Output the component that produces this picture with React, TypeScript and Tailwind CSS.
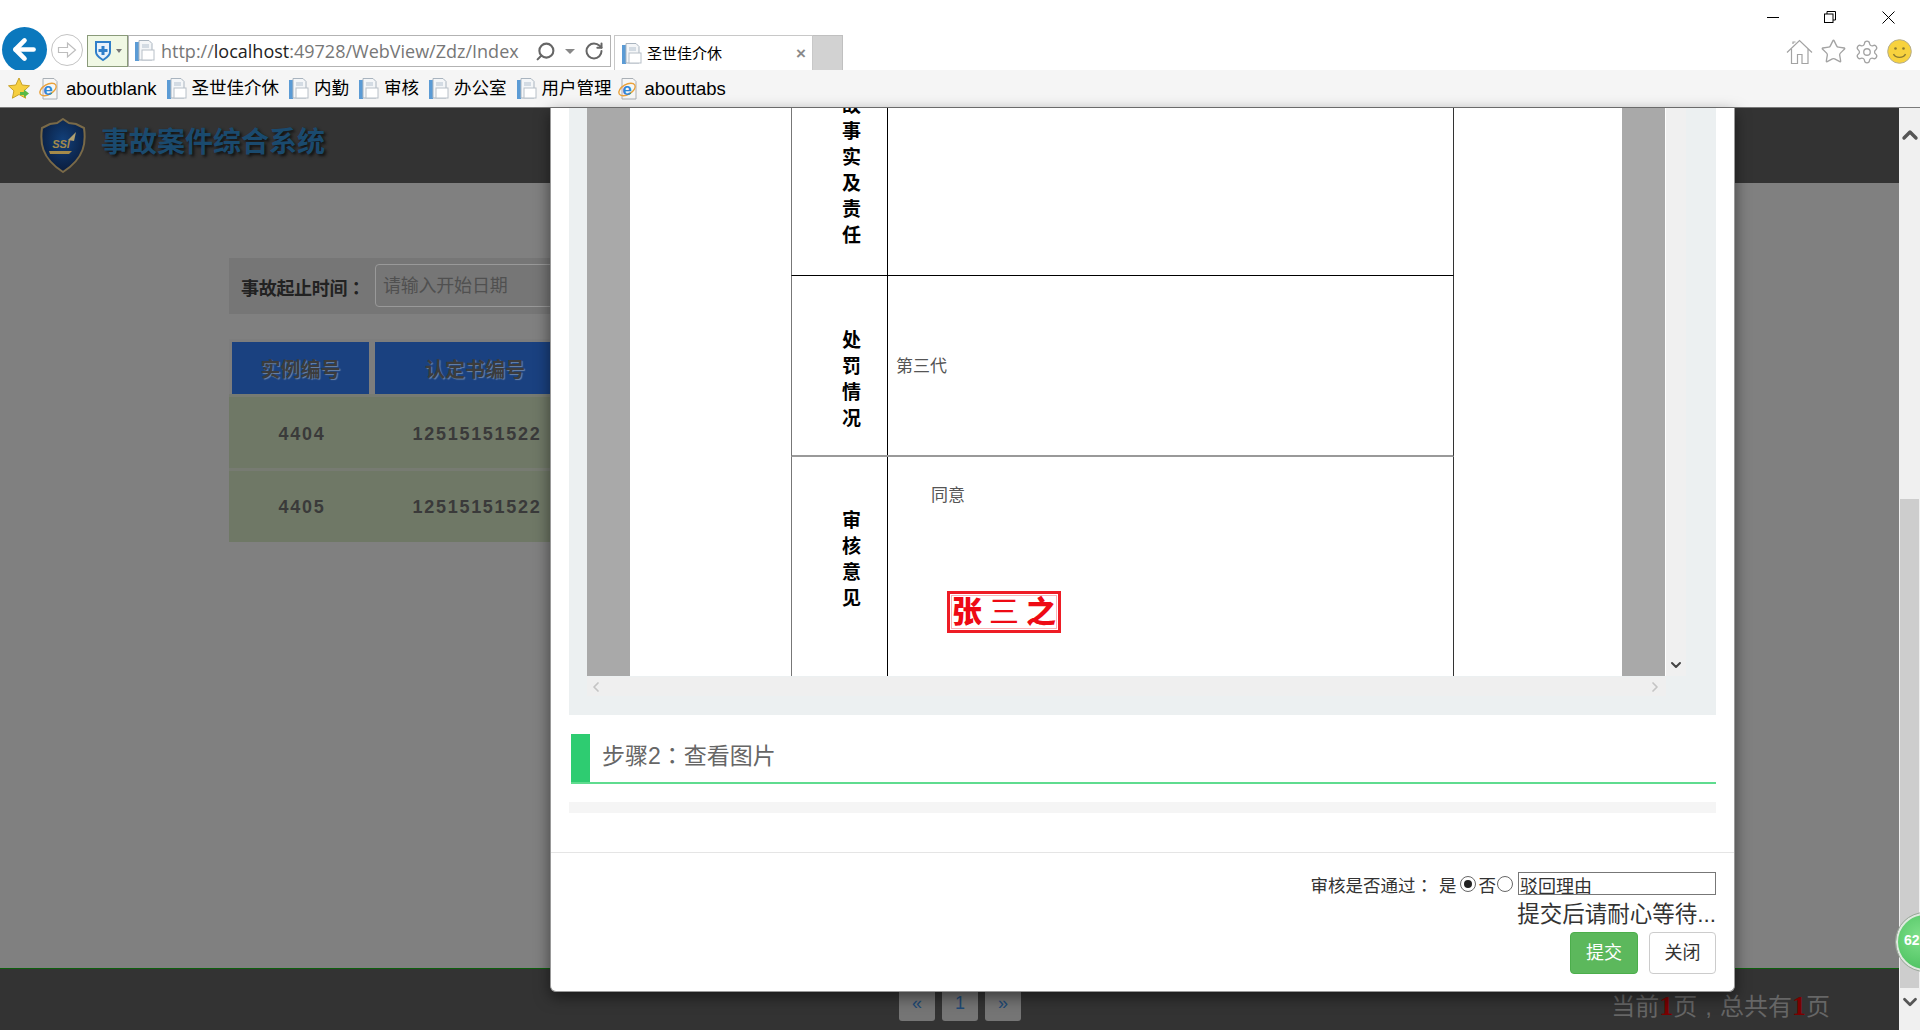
import React from "react";
import { ArrowLeft, ChevronDown, ChevronLeft, ChevronRight, ChevronUp, RotateCw, Search, Settings, Star } from "lucide-react";

function PageIcon({ className = "" }: { className?: string }) {
  return (
    <svg width="24" height="24" viewBox="0 0 24 24" className={className}>
      <rect x="2" y="3" width="4" height="19" fill="#5b9bd5" />
      <path d="M6 1.500h10l3 3V21H6z" fill="#f4f6f8" stroke="#a9b4bf" />
      <rect x="9" y="11" width="12" height="10" fill="#fff" stroke="#b8c0c8" />
      <rect x="9" y="5" width="7" height="4" fill="#d3dbe3" />
    </svg>
  );
}

function IeIcon() {
  return (
    <svg width="24" height="24" viewBox="0 0 24 24" className="shrink-0">
      <path d="M6 1.500h11l3 3V22H6z" fill="#f6f6f6" stroke="#aab0b6" />
      <ellipse cx="11" cy="12.500" rx="9" ry="5" fill="none" stroke="#e9a23b" strokeWidth="1.400" transform="rotate(-30 11 12.500)" />
      <text x="11" y="18" textAnchor="middle" fontSize="17" fontWeight="700" fill="#2f86d6" fontFamily="Liberation Sans">e</text>
    </svg>
  );
}

function Bookmark({ label, ie, className = "" }: { label: string; ie?: boolean; className?: string }) {
  return (
    <div className={`flex items-center ${ie ? "gap-[5px]" : "gap-[3px]"} ${className}`}>
      {ie ? <IeIcon /> : <PageIcon className="shrink-0" />}
      <span className={`${ie ? "text-[18.5px]" : "text-[17.5px]"} leading-none text-black whitespace-nowrap`}>{label}</span>
    </div>
  );
}

function BrowserChrome() {
  return (
    <div className="h-[108px] shrink-0 flex flex-col border-b border-[#7a7a7a]">
      <div className="h-[70px] shrink-0 bg-white flex justify-between overflow-hidden">
        <div className="flex items-start pt-[27px] pl-[2px]">
          <div className="w-[45px] h-[45px] rounded-full bg-[#0b78bd] flex items-center justify-center">
            <ArrowLeft size={31} strokeWidth={3.6} className="text-white" />
          </div>
          <div className="w-[32px] h-[32px] mt-[7px] ml-[4px] rounded-full border border-[#c4c4c4] flex items-center justify-center">
            <svg width="20" height="18" viewBox="0 0 20 18" fill="#fff" stroke="#bdbdbd" strokeWidth="1.200">
              <path d="M1.500 6.500h9V2l8 7-8 7v-4.500h-9z" />
            </svg>
          </div>
          <div className="w-[41px] h-[32px] mt-[8px] ml-[4px] border border-[#8a9a7a] bg-[#f0f8e4] flex items-center justify-center gap-[3px]">
            <svg width="20" height="22" viewBox="0 0 20 22">
              <path d="M3 2h14v10c0 4-4 6-7 8-3-2-7-4-7-8z" fill="#e8f2fb" stroke="#2f7fc9" strokeWidth="2" />
              <path d="M8.500 6h3v3h3v3h-3v3h-3v-3h-3V9h3z" fill="#2f7fc9" />
            </svg>
            <div className="w-0 h-0 border-x-[3px] border-x-transparent border-t-[4px] border-t-[#777]" />
          </div>
          <div className="w-[483px] h-[32px] mt-[8px] border border-[#b3b3b3] flex items-center pl-[4px] pr-[6px]">
            <PageIcon />
            <span className="ml-[4px] text-[18px] leading-none text-[#777] whitespace-nowrap font-['Open_Sans','Noto_Sans',sans-serif]">
              http://<span className="text-[#222]">localhost</span>:49728/WebView/Zdz/Index
            </span>
            <Search size={21} strokeWidth={2.4} className="ml-auto text-[#666] -scale-x-100" />
            <div className="ml-[9px] w-0 h-0 border-x-[5px] border-x-transparent border-t-[5px] border-t-[#888]" />
            <RotateCw size={20} strokeWidth={2.4} className="ml-[9px] text-[#666]" />
          </div>
          <div className="w-[199px] h-[36px] mt-[8px] ml-[3px] border border-[#c8c8c8] border-b-0 flex items-center pl-[5px] pr-[6px] gap-[3px]">
            <PageIcon />
            <span className="text-[15px] leading-none text-black">圣世佳介休</span>
            <span className="ml-auto text-[17px] leading-none font-bold text-[#8a8a8a]">×</span>
          </div>
          <div className="w-[30px] h-[36px] mt-[8px] bg-[#d2d2d2] border-t border-r border-[#c0c0c0]" />
        </div>
        <div className="flex flex-col items-end pr-[8px]">
          <div className="flex items-center h-[34px] pr-[17px] gap-[46px]">
            <div className="w-[12px] h-px bg-black" />
            <svg width="12" height="12" viewBox="0 0 12 12" fill="none" stroke="#000" className="-ml-[1px]">
              <rect x="0.500" y="3" width="8.500" height="8.500" />
              <path d="M3 3V.5h8.500V9H9" />
            </svg>
            <svg width="13" height="13" viewBox="0 0 13 13" stroke="#000">
              <path d="M.5.5l12 12M12.500.5l-12 12" />
            </svg>
          </div>
          <div className="flex items-center gap-[7px] mt-[4px]">
            <svg width="27" height="26" viewBox="0 0 27 26" fill="none" stroke="#a3a3a3" strokeWidth="1.200">
              <path d="M1 13.500L13.500 1.500 26 13.500M5.500 10v14.500h6V15.500h4.500v9h6V10M7 5V3h2.500" />
            </svg>
            <Star size={27} strokeWidth={1.2} className="text-[#a3a3a3]" />
            <Settings size={26} strokeWidth={1.2} className="text-[#a3a3a3]" />
            <svg width="25" height="25" viewBox="0 0 25 25">
              <circle cx="12.500" cy="12.500" r="11.800" fill="#f7d23e" stroke="#b5ad8c" />
              <circle cx="8.500" cy="9.500" r="1.300" fill="#8a7a30" />
              <circle cx="16.500" cy="9.500" r="1.300" fill="#8a7a30" />
              <path d="M6.500 15c2 4.500 10 4.500 12 0" fill="none" stroke="#8a7a30" strokeWidth="1.400" />
            </svg>
          </div>
        </div>
      </div>
      <div className="flex-1 bg-[#f5f5f5] flex items-center pl-[7px] pt-[1px]">
        <svg width="24" height="24" viewBox="0 0 24 24" className="mr-[6px]">
          <path d="M12 1l3.200 7 7.300.8-5.400 5 1.500 7.400L12 17.500l-6.600 3.700 1.500-7.400-5.400-5L8.800 8z" fill="#f6cf3f" stroke="#c9a227" />
          <path d="M13 15h4v-2.500l5 4-5 4V18h-4z" fill="#58b947" />
        </svg>
        <div className="flex items-center gap-[8px]">
          <Bookmark label="aboutblank" ie />
          <Bookmark label="圣世佳介休" />
          <Bookmark label="内勤" />
          <Bookmark label="审核" />
          <Bookmark label="办公室" />
          <Bookmark label="用户管理" />
          <Bookmark label="abouttabs" ie className="-ml-[4px]" />
        </div>
      </div>
    </div>
  );
}

function Logo() {
  return (
    <svg width="46" height="55" viewBox="0 0 46 55" className="shrink-0">
      <defs>
        <radialGradient id="shield" cx="50%" cy="40%" r="60%">
          <stop offset="0%" stopColor="#12407a" />
          <stop offset="100%" stopColor="#0a1c3c" />
        </radialGradient>
      </defs>
      <path d="M23 1l6 4 7 1 8 4c2 14 1 30-21 44C1 40 0 24 2 10l8-4 7-1z" fill="url(#shield)" stroke="#7a6a48" strokeWidth="2" />
      <text x="21" y="30" textAnchor="middle" fontSize="11" fontStyle="italic" fontWeight="700" fill="#a48a4a" fontFamily="Liberation Sans">SSI</text>
      <path d="M9 33h23l-3 3H10z" fill="#a48a4a" />
      <path d="M28 22l8-8-2 9z" fill="#b0a070" />
    </svg>
  );
}

function Colon({ children }: { children: string }) {
  return <span className="font-['Noto_Sans_CJK_TC',sans-serif]">{children}</span>;
}

function DataRow({ id, className }: { id: string; className: string }) {
  const cell = `h-full flex items-center justify-center ${className} text-[18px] font-bold tracking-[1.7px] text-[#3a3a3a]`;
  return (
    <div className="h-[71px] mt-[3px] bg-[#6f7866] flex">
      <div className={`${cell} w-[146px]`}>{id}</div>
      <div className={`${cell} w-[200px] pl-[4px]`}>12515151522</div>
    </div>
  );
}

function BackgroundPage() {
  const head = "h-full bg-[#1a4180] flex items-center justify-center pt-[4px] text-[20px] font-bold text-[#3c3c3c] [text-shadow:1px_1px_1px_#6b84a8]";
  return (
    <div className="flex-1 min-w-0 flex flex-col">
      <div className="h-[75px] shrink-0 bg-[#333] flex items-center pl-[40px]">
        <Logo />
        <span className="ml-[15px] mb-[5px] text-[28px] font-bold leading-none text-[#1a4a6e] [text-shadow:2px_2px_3px_#111] font-['Liberation_Serif','Noto_Sans_CJK_SC',serif]">
          事故案件综合系统
        </span>
      </div>
      <div className="flex-1 min-h-0 bg-[#808080] pt-[75px] pl-[229px]">
        <div className="w-[400px] h-[56px] bg-[#767676] flex items-center pl-[12px]">
          <span className="pt-[4px] text-[18px] font-bold text-[#222] whitespace-nowrap tracking-[-0.3px]">
            事故起止时间<Colon>：</Colon>
          </span>
          <div className="ml-[10px] flex-1 h-[43px] mb-[1px] rounded-[4px] border border-[#999] flex items-center pl-[7px] pt-[2px] text-[18px] tracking-[-0.2px] text-[#505050] whitespace-nowrap">
            请输入开始日期
          </div>
        </div>
        <div className="mt-[25px] w-[400px] bg-[#777b72]">
          <div className="h-[55px] bg-[#7d7d7d] flex gap-[6px] pl-[3px] pt-[3px]">
            <div className={`${head} w-[137px]`}>实例编号</div>
            <div className={`${head} w-[200px]`}>认定书编号</div>
          </div>
          <DataRow id="4404" className="pt-[3px]" />
          <DataRow id="4405" className="pt-[1px]" />
        </div>
      </div>
      <div className="h-[62px] shrink-0 bg-[#333] border-t border-[#0d5f0d] flex items-start pt-[16px] pl-[899px] pr-[69px]">
        <div className="flex gap-[7px]">
          {["«", "1", "»"].map((t) => (
            <div key={t} className="w-[36px] h-[36px] rounded-[3px] bg-[#757575] flex items-center justify-center text-[#1f4a75] text-[18px]">
              {t}
            </div>
          ))}
        </div>
        <div className="ml-auto mt-[4px] text-[24px] leading-[34px] text-[#666] whitespace-nowrap">
          当前<span className="font-bold text-[#7a0000] font-['Liberation_Serif',serif] text-[28px]">1</span>页<span className="mx-[8px]">,</span>总共有<span className="font-bold text-[#7a0000] font-['Liberation_Serif',serif] text-[28px]">1</span>页
        </div>
      </div>
    </div>
  );
}

function Vertical({ chars }: { chars: string }) {
  return (
    <div className="flex flex-col items-center pl-[24px] text-[19px] leading-[26px] font-bold text-black">
      {chars.split("").map((c, i) => (
        <span key={i}>{c}</span>
      ))}
    </div>
  );
}

function Document() {
  return (
    <div className="flex h-[568px]">
      <div className="w-[43px] bg-[#a9a9a9]" />
      <div className="w-[992px] bg-white pl-[161px] flex flex-col overflow-hidden">
        <div className="w-[663px] h-[168px] shrink-0 flex border-l border-r border-l-[#777] border-r-[#333] border-b border-b-black overflow-hidden">
          <div className="w-[95px] shrink-0 flex flex-col justify-end pb-[26px] overflow-hidden">
            <Vertical chars="故事实及责任" />
          </div>
          <div className="flex-1 border-l border-black" />
        </div>
        <div className="w-[663px] h-[181px] shrink-0 flex border-l border-r border-l-[#777] border-r-[#333] border-b-2 border-b-[#999]">
          <div className="w-[95px] shrink-0 pt-[52px]">
            <Vertical chars="处罚情况" />
          </div>
          <div className="flex-1 border-l border-black flex items-center pl-[8px] pt-[2px] text-[17px] text-[#555]">第三代</div>
        </div>
        <div className="w-[663px] flex-1 flex border-l border-r border-l-[#777] border-r-[#333]">
          <div className="w-[95px] shrink-0 pt-[51px]">
            <Vertical chars="审核意见" />
          </div>
          <div className="flex-1 border-l border-black pl-[43px] pt-[27px]">
            <div className="text-[17px] leading-[24px] text-[#555]">同意</div>
            <div className="mt-[83px] ml-[16px] w-[114px] h-[42px] border-[3px] border-[#ee1c25] p-px">
              <div className="h-full border border-[#f9b4b8] flex items-center justify-center gap-[7px] text-[30px] leading-none font-black text-[#ee0a14] font-['Liberation_Serif','Noto_Sans_CJK_SC',serif]">
                <span>张</span>
                <span className="font-normal">三</span>
                <span>之</span>
              </div>
            </div>
          </div>
        </div>
      </div>
      <div className="w-[44px] bg-[#a9a9a9] border-r border-white" />
      <div className="w-[20px] bg-[#f0f0f0] flex items-end justify-center pb-[3px]">
        <ChevronDown size={16} strokeWidth={3} className="text-[#444]" />
      </div>
    </div>
  );
}

function Radio({ on }: { on?: boolean }) {
  return (
    <span className="w-[16px] h-[16px] rounded-full border border-[#666] bg-white flex items-center justify-center">
      {on && <span className="w-[8px] h-[8px] rounded-full bg-[#222]" />}
    </span>
  );
}

function Modal() {
  return (
    <div className="absolute left-[550px] top-0 w-[1185px] h-[884px] bg-white rounded-b-[6px] border-x border-b border-[#999] shadow-[0_5px_15px_rgba(0,0,0,0.5)] flex flex-col z-10">
      <div className="ml-[18px] mr-[18px] bg-[#ecf0f1] pl-[18px] pb-[19px]">
        <Document />
        <div className="mt-[1px] w-[1079px] h-[19px] bg-[#efefef] flex items-center justify-between px-[1px]">
          <ChevronLeft size={16} strokeWidth={2.6} className="text-[#c4c4c4]" />
          <ChevronRight size={16} strokeWidth={2.6} className="text-[#c4c4c4] mr-[2px]" />
        </div>
      </div>
      <div className="mt-[19px] ml-[20px] mr-[18px] h-[50px] shrink-0 flex items-center border-b-2 border-[#5fdc8f]">
        <div className="w-[19px] h-full bg-[#2ecc71]" />
        <span className="ml-[12px] mb-[5px] text-[23px] leading-none text-[#666]">
          步骤2<Colon>：</Colon>查看图片
        </span>
      </div>
      <div className="mt-[18px] mx-[18px] h-[11px] shrink-0 bg-[#f5f5f5]" />
      <div className="mt-[39px] flex-1 border-t border-[#e5e5e5] pt-[19px] pr-[18px] flex flex-col items-end">
        <div className="h-[23px] flex items-center text-[17.5px] text-[#333]">
          <span className="mr-[6px] pt-[5px]">
            审核是否通过<Colon>：</Colon>
          </span>
          <span className="mr-[3px] pt-[5px]">是</span>
          <Radio on />
          <span className="ml-[3px] mr-[1px] pt-[5px]">否</span>
          <Radio />
          <div className="ml-[5px] w-[198px] h-[23px] border border-[#777] pl-[1px] pt-[1px] text-[18px] leading-[26px] overflow-hidden text-[#333]">驳回理由</div>
        </div>
        <div className="mt-[9px] h-[22px] text-[22.5px] leading-[22px] text-[#333] whitespace-nowrap">提交后请耐心等待...</div>
        <div className="mt-[6px] flex gap-[11px]">
          <div className="w-[68px] h-[42px] rounded-[4px] bg-[#5cb85c] border border-[#4cae4c] flex items-center justify-center text-[18px] text-white">提交</div>
          <div className="w-[67px] h-[42px] rounded-[4px] bg-white border border-[#ccc] flex items-center justify-center text-[18px] text-[#333]">关闭</div>
        </div>
      </div>
    </div>
  );
}

export default function App() {
  return (
    <div className="relative w-[1920px] h-[1030px] overflow-hidden flex flex-col bg-white font-['Liberation_Sans','Noto_Sans_CJK_SC',sans-serif]">
      <BrowserChrome />
      <div className="relative flex-1 min-h-0 flex">
        <BackgroundPage />
        <div className="w-[21px] shrink-0 bg-[#f0f0f0] flex flex-col items-center">
          <ChevronUp size={24} strokeWidth={3.4} className="mt-[15px] text-[#555]" />
          <div className="mt-[352px] w-[19px] h-[489px] bg-[#cdcdcd]" />
          <ChevronDown size={22} strokeWidth={3} className="mt-[3px] text-[#555]" />
        </div>
        <Modal />
      </div>
      <div className="absolute left-[1896px] top-[913px] w-[58px] h-[58px] rounded-full border-2 border-[#dfe8df] outline outline-[#9aa89a] bg-[radial-gradient(circle_at_40%_40%,#7fe08a,#3cb853)] flex items-center pl-[6px] pb-[3px] text-[14px] font-bold text-white z-20">
        62
      </div>
    </div>
  );
}
